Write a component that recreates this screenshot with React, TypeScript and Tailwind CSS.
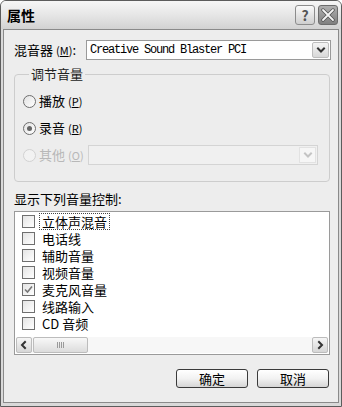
const cjk = "font-['Noto_Sans_CJK_SC','Noto_Sans',sans-serif]";

function Mnemonic({ letter }: { letter: string }) {
  return (
    <span className="ml-[3px] text-[11px]">
      (<span className="underline">{letter}</span>)
    </span>
  );
}

function Chevron({ dir, color = '#333' }: { dir: 'down' | 'left' | 'right'; color?: string }) {
  const d =
    dir === 'down' ? 'M2 3.5 L5 6.5 L8 3.5' : dir === 'left' ? 'M6 2 L3 5 L6 8' : 'M4 2 L7 5 L4 8';
  return (
    <svg width="10" height="10" viewBox="0 0 10 10">
      <path d={d} fill="none" stroke={color} strokeWidth="2" strokeLinecap="square" />
    </svg>
  );
}

function Radio({ checked, disabled }: { checked?: boolean; disabled?: boolean }) {
  return (
    <span
      className={`flex h-[13px] w-[13px] items-center justify-center rounded-full border ${
        disabled ? 'border-[#d2d2d2] bg-[#f2f2f2]' : 'border-[#6e6e6e] bg-gradient-to-br from-[#e2e2e2] to-white'
      }`}
    >
      {checked && <span className="h-[5px] w-[5px] rounded-full bg-[#666]" />}
    </span>
  );
}

function Checkbox({ checked }: { checked?: boolean }) {
  return (
    <span className="flex h-[13px] w-[13px] shrink-0 items-center justify-center border border-[#6f6f6f] bg-gradient-to-br from-[#e4e4e4] to-white">
      {checked && (
        <svg width="9" height="9" viewBox="0 0 9 9">
          <path d="M1 4.5 L3.5 7 L8 1.5" fill="none" stroke="#777" strokeWidth="1.6" />
        </svg>
      )}
    </span>
  );
}

const controls = [
  { label: '立体声混音', checked: false, focused: true },
  { label: '电话线', checked: false },
  { label: '辅助音量', checked: false },
  { label: '视频音量', checked: false },
  { label: '麦克风音量', checked: true },
  { label: '线路输入', checked: false },
  { label: 'CD 音频', checked: false },
];

function PushButton({ children }: { children: React.ReactNode }) {
  return (
    <button
      type="button"
      className="flex h-[19px] w-[72px] items-center justify-center rounded-[3px] border border-[#3a3a3a] bg-gradient-to-b from-white via-[#f2f2f2] to-[#d6d6d6] text-[13px] leading-none text-black"
    >
      {children}
    </button>
  );
}

export default function App() {
  return (
    <div className={`flex h-[407px] w-[342px] flex-col overflow-hidden rounded-t-[6px] border border-[#5c5c5c] bg-[#d9d9d9] ${cjk}`}>
      {/* title bar */}
      <div className="flex h-[28px] shrink-0 items-center bg-gradient-to-b from-[#f6f6f6] via-[#e6e6e6] to-[#d2d2d2] pl-[6px] pr-[3px]">
        <span className="text-[14px] font-bold text-black">属性</span>
        <div className="ml-auto flex gap-[3px]">
          <span className="flex h-[20px] w-[20px] items-center justify-center rounded-[3px] border border-[#8c8c8c] bg-gradient-to-b from-[#fafafa] to-[#cfcfcf] text-[14px] font-bold leading-none text-[#555]">
            ?
          </span>
          <span className="flex h-[20px] w-[20px] items-center justify-center rounded-[3px] border border-[#6c6c6c] bg-gradient-to-b from-[#b0b0b0] to-[#808080]">
            <svg width="14" height="14" viewBox="0 0 14 14">
              <path d="M2 2 L12 12 M12 2 L2 12" stroke="#555" strokeWidth="3.4" strokeLinecap="round" />
              <path d="M2 2 L12 12 M12 2 L2 12" stroke="#f4f4f4" strokeWidth="1.8" strokeLinecap="round" />
            </svg>
          </span>
        </div>
      </div>

      {/* body */}
      <div className="mx-[2px] mb-[3px] flex flex-1 flex-col border border-[#8a8a8a] bg-[#ededed] pl-[10px] pr-[7px] text-[13px] text-black">
        <div className="mt-[10px] flex h-[20px] items-center">
          <span className="w-[72px] whitespace-nowrap">
            混音器<Mnemonic letter="M" />:
          </span>
          <div className="flex h-[20px] flex-1 items-center border border-[#9a9a9a] bg-white pl-[3px] pr-[1px]">
            <span className="font-['Liberation_Mono',monospace] text-[12px] tracking-[-1.2px]">
              Creative Sound Blaster PCI
            </span>
            <span className="ml-auto flex h-[16px] w-[17px] items-center justify-center rounded-[2px] border border-[#bdbdbd] bg-gradient-to-b from-[#f4f4f4] to-[#d8d8d8]">
              <Chevron dir="down" />
            </span>
          </div>
        </div>

        <fieldset className="mt-[7px] mr-[1px] rounded-[4px] border border-[#cdcdcd] pb-[16px] pl-[8px] pr-[11px]">
          <legend className="ml-[6px] px-[2px] text-[13px] leading-[14px] text-[#222]">调节音量</legend>
          <div className="mt-[10px] flex flex-col gap-[7px]">
            <label className="flex h-[20px] items-center gap-[3px]">
              <Radio />
              <span>
                播放<Mnemonic letter="P" />
              </span>
            </label>
            <label className="flex h-[20px] items-center gap-[3px]">
              <Radio checked />
              <span>
                录音<Mnemonic letter="R" />
              </span>
            </label>
            <label className="flex h-[20px] items-center gap-[3px] text-[#b8b8b8]">
              <Radio disabled />
              <span className="w-[46px]">
                其他<Mnemonic letter="O" />
              </span>
              <div className="flex h-[20px] flex-1 items-center border border-[#d4d4d4] bg-[#f0f0f0] pr-[1px]">
                <span className="ml-auto flex h-[16px] w-[17px] items-center justify-center border border-[#e2e2e2] bg-[#f6f6f6]">
                  <Chevron dir="down" color="#c4c4c4" />
                </span>
              </div>
            </label>
          </div>
        </fieldset>

        <div className="mt-[10px] leading-[14px]">显示下列音量控制:</div>

        <div className="mt-[5px] mr-[1px] flex h-[144px] flex-col border border-[#9a9a9a] bg-white p-[1px]">
          <div className="flex flex-col">
            {controls.map((c) => (
              <div key={c.label} className="flex h-[17px] items-center pl-[6px]">
                <Checkbox checked={c.checked} />
                <span
                  className={`ml-[4px] flex h-[17px] items-center px-[2px] leading-[15px] ${
                    c.focused ? 'border border-dotted border-[#444]' : 'border border-transparent'
                  }`}
                >
                  {c.label}
                </span>
              </div>
            ))}
          </div>
          {/* horizontal scrollbar */}
          <div className="mt-auto flex h-[16px] bg-[#f7f7f7]">
            <span className="flex h-[16px] w-[16px] items-center justify-center rounded-[2px] border border-[#bcbcbc] bg-gradient-to-b from-[#f6f6f6] to-[#d6d6d6]">
              <Chevron dir="left" />
            </span>
            <span className="ml-[1px] flex h-[16px] w-[55px] items-center justify-center gap-[1px] rounded-[2px] border border-[#bcbcbc] bg-gradient-to-b from-[#f8f8f8] to-[#dcdcdc]">
              <span className="h-[6px] w-px bg-[#9a9a9a]" />
              <span className="h-[6px] w-px bg-[#9a9a9a]" />
              <span className="h-[6px] w-px bg-[#9a9a9a]" />
              <span className="h-[6px] w-px bg-[#9a9a9a]" />
            </span>
            <span className="ml-auto flex h-[16px] w-[16px] items-center justify-center rounded-[2px] border border-[#bcbcbc] bg-gradient-to-b from-[#f6f6f6] to-[#d6d6d6]">
              <Chevron dir="right" />
            </span>
          </div>
        </div>

        <div className="mt-[14px] mr-[2px] flex justify-end gap-[9px]">
          <PushButton>确定</PushButton>
          <PushButton>取消</PushButton>
        </div>
      </div>
    </div>
  );
}
